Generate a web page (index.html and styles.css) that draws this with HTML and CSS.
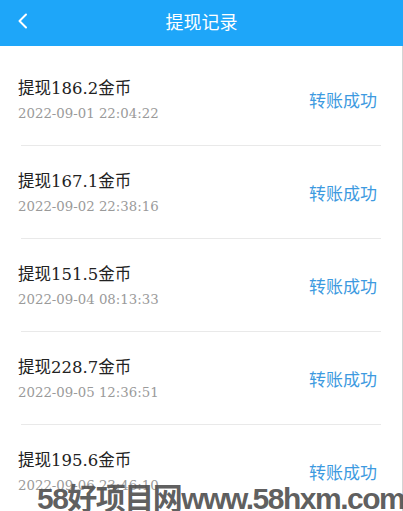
FILE: index.html
```html
<!DOCTYPE html>
<html>
<head>
<meta charset="UTF-8" />
<title>提现记录</title>
<link rel="stylesheet" href="styles.css">
</head>
<body>
<div class="header">
	<span class="back">
		<svg width="12" height="16" viewBox="0 0 12 16"><polyline points="9,1.5 2.5,8 9,14.5" fill="none" stroke="#fff" stroke-width="2" stroke-linecap="round" stroke-linejoin="round"/></svg>
	</span>
	<h1 class="title">提现记录</h1>
</div>
<div class="list">
	<div class="row">
		<div class="info">
			<div class="amount">提现186.2金币</div>
			<div class="time">2022-09-01 22:04:22</div>
		</div>
		<div class="status">转账成功</div>
	</div>
	<div class="row">
		<div class="info">
			<div class="amount">提现167.1金币</div>
			<div class="time">2022-09-02 22:38:16</div>
		</div>
		<div class="status">转账成功</div>
	</div>
	<div class="row">
		<div class="info">
			<div class="amount">提现151.5金币</div>
			<div class="time">2022-09-04 08:13:33</div>
		</div>
		<div class="status">转账成功</div>
	</div>
	<div class="row">
		<div class="info">
			<div class="amount">提现228.7金币</div>
			<div class="time">2022-09-05 12:36:51</div>
		</div>
		<div class="status">转账成功</div>
	</div>
	<div class="row">
		<div class="info">
			<div class="amount">提现195.6金币</div>
			<div class="time">2022-09-06 23:46:10</div>
		</div>
		<div class="status">转账成功</div>
	</div>
</div>
<div class="watermark">58好项目网www.58hxm.com</div>
</body>
</html>
```

FILE: styles.css
```css
html, body {
	margin: 0;
	padding: 0;
	height: 100%;
	overflow: hidden;
	background: #fff;
}
body {
	position: relative;
	font-family: "Noto Sans CJK SC", sans-serif;
}
.header {
	height: 46px;
	background: #1ea6f9;
	display: flex;
	align-items: center;
	justify-content: center;
	position: relative;
}
.back {
	position: absolute;
	left: 17px;
	top: 13px;
	line-height: 0;
}
.title {
	margin: 0 0 5px;
	font-size: 18px;
	font-weight: normal;
	color: #fff;
	line-height: 24px;
}
.list {
	padding-top: 7px;
	border-right: 1px solid #d4d4d4;
	height: calc(100% - 46px);
	box-sizing: border-box;
	overflow: hidden;
}
.row {
	margin: 0 21px;
	height: 92px;
	border-bottom: 1px solid #e9e9e9;
	display: flex;
	justify-content: space-between;
	align-items: center;
}
.info {
	margin-left: -3px;
	margin-top: 3px;
	display: flex;
	flex-direction: column;
	gap: 2px;
}
.amount {
	font-family: "DejaVu Serif", "Noto Sans CJK SC", serif;
	font-size: 16.5px;
	line-height: 24px;
	color: #222;
}
.time {
	font-family: "DejaVu Serif", serif;
	font-size: 13.3px;
	line-height: 22px;
	color: #9a9a9a;
}
.status {
	margin-right: 4px;
	font-size: 17px;
	color: #3d9ae0;
}
.watermark {
	position: absolute;
	left: 37px;
	top: 484px;
	font-family: "Liberation Sans", "Noto Sans CJK SC", sans-serif;
	font-weight: bold;
	font-size: 30px;
	line-height: 30px;
	letter-spacing: -1.5px;
	color: rgba(80, 80, 80, 0.92);
	white-space: nowrap;
}
```
